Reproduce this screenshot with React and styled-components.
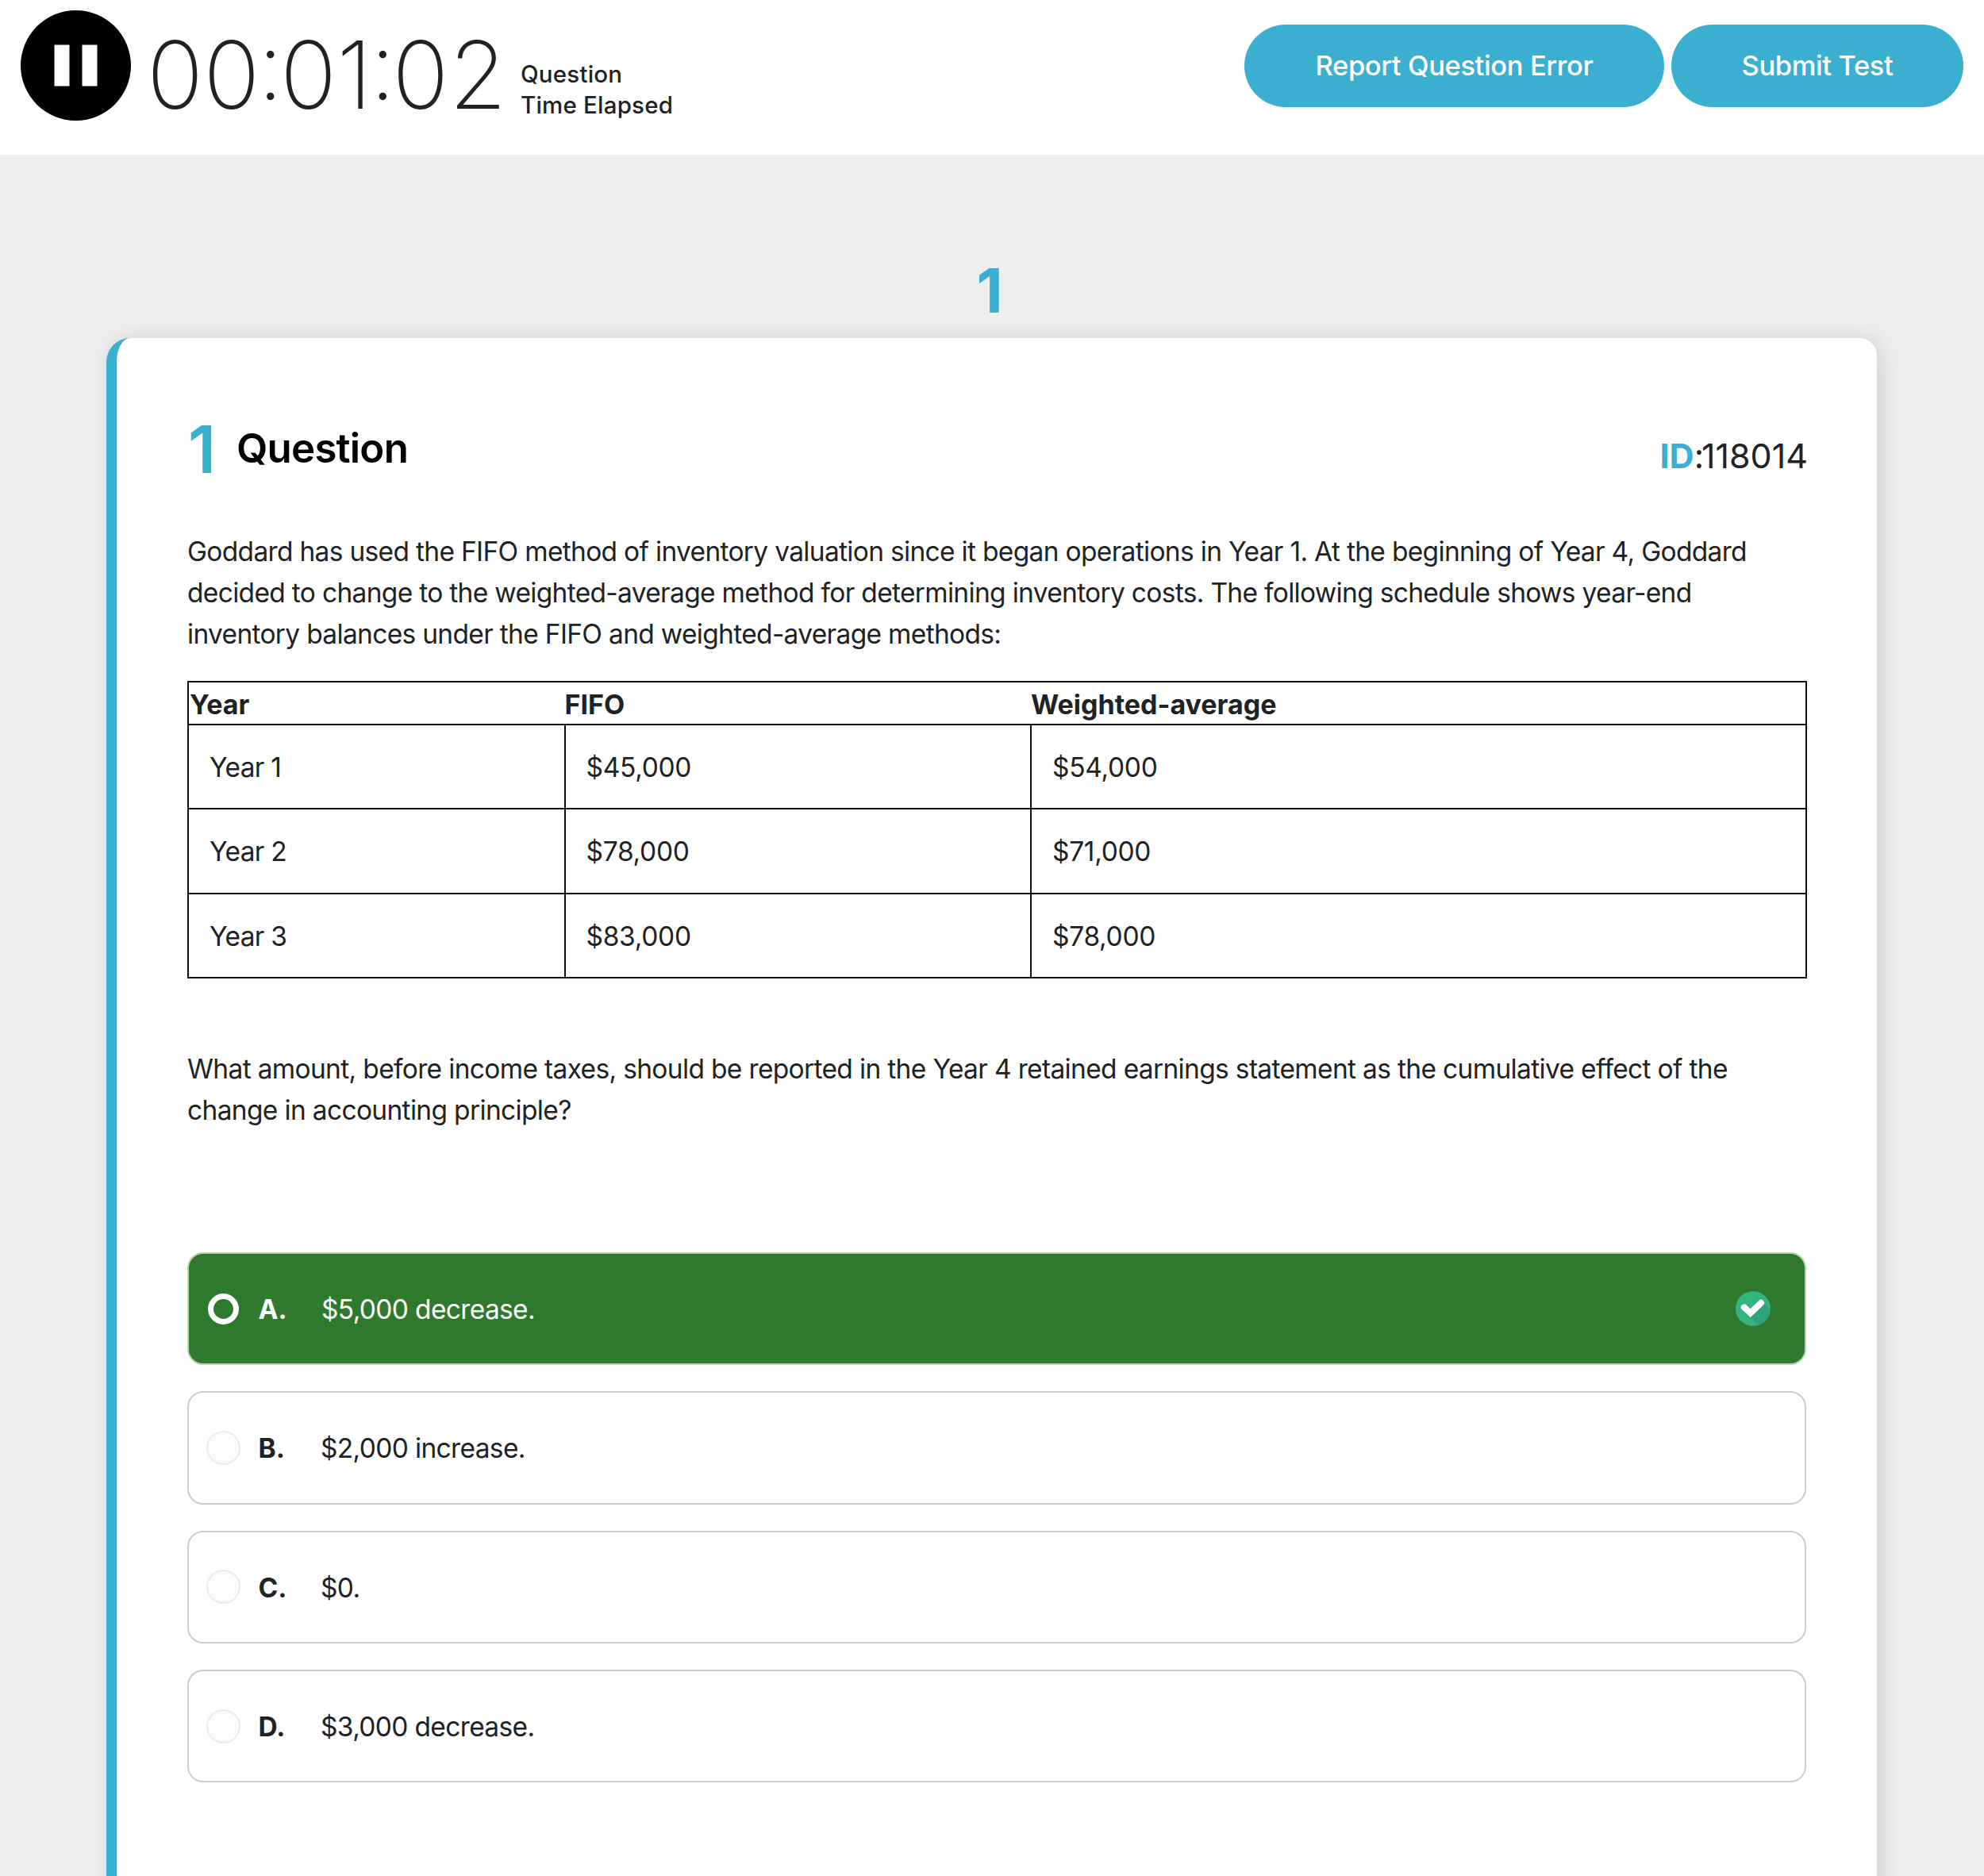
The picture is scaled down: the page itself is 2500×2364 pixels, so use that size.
import React from 'react';
import styled, { createGlobalStyle } from 'styled-components';

const colorPrimary = '#3aafd0';
const colorText = '#202223';

const GlobalStyle = createGlobalStyle`
    * {
        box-sizing: border-box;
    }
    body {
        margin: 0;
        background: #eeeeee;
        color: ${colorText};
        font-family: Inter, 'Liberation Sans', sans-serif;
    }
`
const Page = styled.div`
    width: 2500px;
    height: 2364px;
    overflow: hidden;
    background: #eeeeee;
`
const Header = styled.header`
    display: flex;
    justify-content: space-between;
    align-items: flex-start;
    height: 195px;
    padding: 13px 26px 0;
    background: white;
`
const Timer = styled.div`
    display: flex;
    align-items: flex-start;
`
const PauseIcon = styled.svg`
    display: block;
    width: 139px;
    height: 139px;
`
const Clock = styled.div`
    display: flex;
    width: 463px;
    margin: 22px 0 0 20px;
    font-size: 118px;
    font-weight: 200;
    line-height: 118px;
    white-space: nowrap;
`
// the colon sits higher than the font's default, centred on the digits
const Colon = styled.span`
    margin: -12px -4.3px 0 -3px;
    font-feature-settings: 'calt' 0;
`
const ClockLabel = styled.div`
    margin: 61px 0 0 8px;
    font-size: 29.5px;
    font-weight: 500;
    line-height: 39px;
    letter-spacing: 0.2px;
    white-space: nowrap;
`
const Actions = styled.div`
    display: flex;
    gap: 9px;
    padding-top: 18px;
`
const Btn = styled.button`
    width: ${(props) => props.$width}px;
    height: 104px;
    padding: 0 0 1px;
    border: none;
    border-radius: 52px;
    background-color: ${colorPrimary};
    color: white;
    font-family: inherit;
    font-size: 34.5px;
    font-weight: 500;
    letter-spacing: -0.38px;
    cursor: pointer;
`
const PageNumber = styled.div`
    height: 231px;
    padding: 126px 6px 0 0;
    color: ${colorPrimary};
    font-size: 77px;
    font-weight: 700;
    line-height: 90px;
    text-align: center;
`
const Card = styled.main`
    width: 2231px;
    height: 2000px;
    margin-left: 134px;
    padding: 98px 89px 0 89px;
    border-left: 13px solid ${colorPrimary};
    border-radius: 30px 22px 0 0;
    background: white;
    box-shadow: 5px 0 26px rgba(0, 0, 0, 0.13);
`
const CardHead = styled.div`
    display: flex;
    align-items: flex-start;
    height: 145px;
`
const Number = styled.span`
    width: 62px;
    padding-left: 1px;
    color: ${colorPrimary};
    font-size: 83px;
    font-weight: 600;
    line-height: 84px;
`
const Tittle = styled.h1`
    margin: 10.5px 0 0;
    color: black;
    font-size: 51px;
    font-weight: 600;
    line-height: 60px;
    letter-spacing: -0.8px;
`
const QuestionId = styled.div`
    margin: 24.5px -2px 0 auto;
    font-size: 43px;
    line-height: 50px;

    b {
        color: ${colorPrimary};
        font-weight: 700;
    }
    span {
        letter-spacing: -3px;
    }
`
const Paragraph = styled.p`
    margin: ${(props) => props.$top || 0}px 0 0;
    font-size: 33.5px;
    line-height: 52px;
    letter-spacing: ${(props) => props.$spacing || -0.68}px;
    white-space: nowrap;
`
const Line = styled.span`
    display: block;
`
const Table = styled.table`
    width: 2041px;
    margin: 33px 0 0;
    border: 2px solid #111;
    border-collapse: collapse;
    table-layout: fixed;
    font-size: 33.5px;
`
const HeadCell = styled.th`
    width: ${(props) => props.$width};
    height: 54px;
    padding: 2px 0 0;
    font-size: 34px;
    font-weight: 700;
    text-align: left;

    &:first-child {
        padding-left: 1px;
    }
`
const Cell = styled.td`
    height: 106.3px;
    padding: 2px 26px 0;
    border: 2px solid #111;
    letter-spacing: -0.3px;

    &:first-child {
        letter-spacing: -0.7px;
    }
`
const Options = styled.div`
    display: grid;
    gap: 33px;
    margin-top: 153px;
`
const Option = styled.label`
    display: flex;
    align-items: center;
    height: 142.4px;
    padding: 0 43px 0 22px;
    border: 2px solid ${(props) => (props.$correct ? '#b9d3b5' : '#cccccc')};
    border-radius: 20px;
    background: ${(props) => (props.$correct ? '#2f792f' : 'white')};
    color: ${(props) => (props.$correct ? 'white' : colorText)};
    font-size: 33.5px;
    letter-spacing: -0.65px;
`
const Radio = styled.span`
    width: ${(props) => (props.$correct ? 39 : 43)}px;
    height: ${(props) => (props.$correct ? 39 : 43)}px;
    margin: 0 ${(props) => (props.$correct ? 2 : 0)}px;
    border: ${(props) => (props.$correct ? '7px solid white' : '2px solid #ececec')};
    border-radius: 50%;
    background: ${(props) => (props.$correct ? 'transparent' : '#fcfcfc')};
`
const Letter = styled.b`
    width: ${(props) => (props.$correct ? 79.5 : 78.5)}px;
    margin: 2px 0 0 22.5px;
    font-weight: 700;
    letter-spacing: 0;
`
const Answer = styled.span`
    margin-top: 2px;
`
const CheckIcon = styled.svg`
    width: 44px;
    height: 44px;
    margin-left: auto;
`

const rows = [
    ['Year 1', '$45,000', '$54,000'],
    ['Year 2', '$78,000', '$71,000'],
    ['Year 3', '$83,000', '$78,000'],
]

const options = [
    { letter: 'A.', text: '$5,000 decrease.', correct: true },
    { letter: 'B.', text: '$2,000 increase.' },
    { letter: 'C.', text: '$0.' },
    { letter: 'D.', text: '$3,000 decrease.' },
]

const App = () => {
    return (
        <Page>
            <GlobalStyle />
            <Header>
                <Timer>
                    <PauseIcon viewBox="0 0 139 139">
                        <circle cx="69.5" cy="69.5" r="69.5" fill="black" />
                        <rect x="42.5" y="43.5" width="19" height="52" fill="white" />
                        <rect x="77.5" y="43.5" width="19" height="52" fill="white" />
                    </PauseIcon>
                    <Clock>
                        <span>00</span>
                        <Colon>:</Colon>
                        <span>01</span>
                        <Colon>:</Colon>
                        <span>02</span>
                    </Clock>
                    <ClockLabel>
                        <Line>Question</Line>
                        <Line>Time Elapsed</Line>
                    </ClockLabel>
                </Timer>
                <Actions>
                    <Btn $width={529}>Report Question Error</Btn>
                    <Btn $width={368}>Submit Test</Btn>
                </Actions>
            </Header>
            <PageNumber>1</PageNumber>
            <Card>
                <CardHead>
                    <Number>1</Number>
                    <Tittle>Question</Tittle>
                    <QuestionId><b>ID</b><span>:</span>118014</QuestionId>
                </CardHead>
                <Paragraph>
                    <Line>Goddard has used the FIFO method of inventory valuation since it began operations in Year 1. At the beginning of Year 4, Goddard</Line>
                    <Line>decided to change to the weighted-average method for determining inventory costs. The following schedule shows year-end</Line>
                    <Line>inventory balances under the FIFO and weighted-average methods:</Line>
                </Paragraph>
                <Table>
                    <thead>
                        <tr>
                            <HeadCell $width="474.5px">Year</HeadCell>
                            <HeadCell $width="587.5px">FIFO</HeadCell>
                            <HeadCell>Weighted-average</HeadCell>
                        </tr>
                    </thead>
                    <tbody>
                        {rows.map((row) => (
                            <tr key={row[0]}>
                                {row.map((cell) => <Cell key={cell}>{cell}</Cell>)}
                            </tr>
                        ))}
                    </tbody>
                </Table>
                <Paragraph $top={88} $spacing={-0.66}>
                    <Line>What amount, before income taxes, should be reported in the Year 4 retained earnings statement as the cumulative effect of the</Line>
                    <Line>change in accounting principle?</Line>
                </Paragraph>
                <Options>
                    {options.map(({ letter, text, correct }) => (
                        <Option key={letter} $correct={correct}>
                            <Radio $correct={correct} />
                            <Letter $correct={correct}>{letter}</Letter>
                            <Answer>{text}</Answer>
                            {correct && (
                                <CheckIcon viewBox="0 0 44 44">
                                    <circle cx="22" cy="22" r="22" fill="#32b57e" />
                                    <path d="M35.5 14.5 L43.6 24 A22 22 0 0 1 27 43.4 L18.7 32 Z" fill="#2fa27c" />
                                    <path d="M10.8 20.4 L18.7 27.6 L32 14.8" fill="none" stroke="white" strokeWidth="8" strokeLinecap="round" />
                                </CheckIcon>
                            )}
                        </Option>
                    ))}
                </Options>
            </Card>
        </Page>
    )
}

export default App;
